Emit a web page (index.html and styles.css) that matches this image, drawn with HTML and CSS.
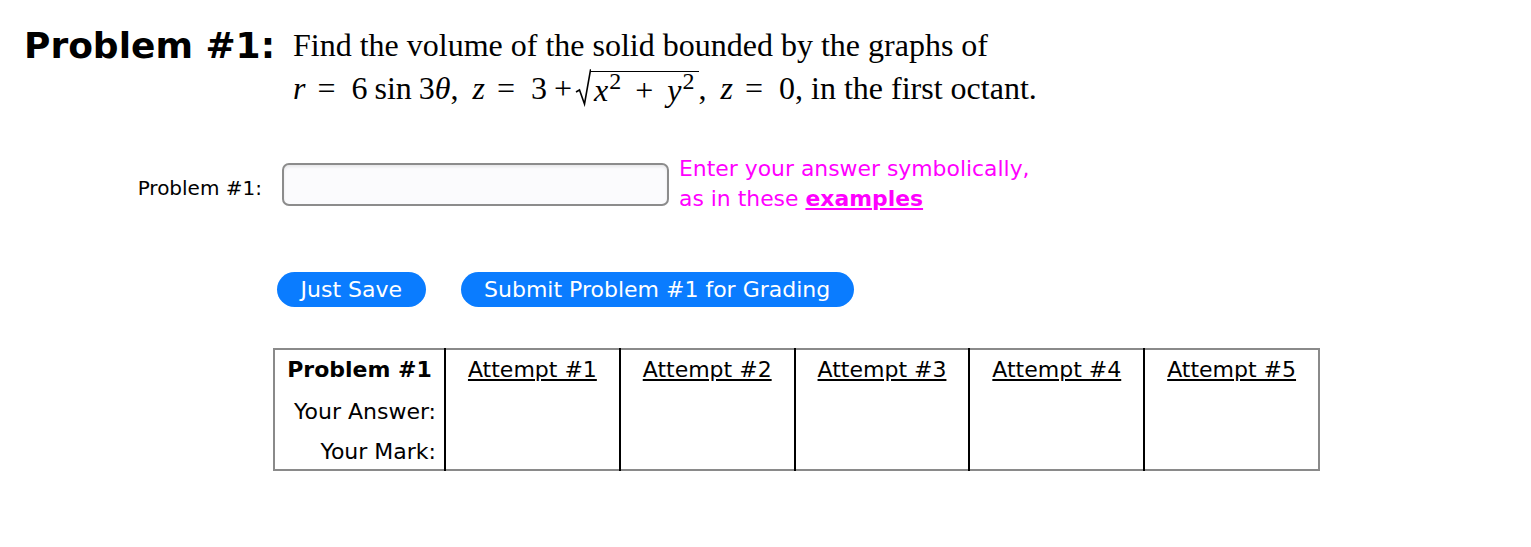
FILE: index.html
```html
<!DOCTYPE html>
<html>
<head>
<meta charset="utf-8">
<link rel="stylesheet" href="styles.css">
</head>
<body>
<div class="problem">
  <div class="ptitle">Problem #1:</div>
  <div class="ptext">
    <div class="pline">Find the volume of the solid bounded by the graphs of</div>
    <div class="pline"><span class="mi">r</span><span class="mo">=</span>6<span class="fn">sin</span>3<span class="mi">θ</span>,<span class="sp"></span><span class="mi">z</span><span class="mo">=</span>3<span class="mb">+</span><span class="sqrt"><svg class="rad" viewBox="0 0 16 38" width="16" height="38"><path d="M1 23 L4.5 21 L9.5 35 L15.5 1 L16 1" fill="none" stroke="#000" stroke-width="1.6"/></svg><span class="radicand"><span class="mi">x</span><sup>2</sup><span class="mr">+</span><span class="mi">y</span><sup>2</sup></span></span>,<span class="sp"></span><span class="mi">z</span><span class="mo">=</span>0, in the first octant.</div>
  </div>
</div>

<div class="answer-row">
  <label class="alabel">Problem #1:</label>
  <input class="ainput" type="text">
  <div class="hint">Enter your answer symbolically,<br>as in these <a class="ex" href="#">examples</a></div>
</div>

<div class="buttons">
  <button class="btn save">Just Save</button>
  <button class="btn submit">Submit Problem #1 for Grading</button>
</div>

<table class="attempts">
  <colgroup>
    <col class="c0">
    <col><col><col><col><col>
  </colgroup>
  <tr class="hrow">
    <th class="first">Problem #1</th>
    <td><a href="#">Attempt #1</a></td>
    <td><a href="#">Attempt #2</a></td>
    <td><a href="#">Attempt #3</a></td>
    <td><a href="#">Attempt #4</a></td>
    <td><a href="#">Attempt #5</a></td>
  </tr>
  <tr class="row2">
    <td class="rl">Your Answer:</td>
    <td></td><td></td><td></td><td></td><td></td>
  </tr>
  <tr class="row3">
    <td class="rl">Your Mark:</td>
    <td></td><td></td><td></td><td></td><td></td>
  </tr>
</table>
</body>
</html>
```

FILE: styles.css
```css
body {
  margin: 8px;
  background: #fff;
  color: #000;
  font-family: "DejaVu Sans", Verdana, sans-serif;
}

.problem {
  display: flex;
  align-items: flex-start;
  padding: 16px 0 0 16px;
}

.ptitle {
  font-weight: bold;
  font-size: 36px;
  line-height: 43px;
  width: 269px;
  flex: none;
}

.ptext {
  font-family: "Liberation Serif", "Times New Roman", serif;
  font-size: 32px;
  line-height: 43px;
}

.pline {
  white-space: nowrap;
}

.mi {
  font-style: italic;
}

.mo {
  margin: 0 16px 0 12px;
}

.mb {
  margin: 0 3px 0 7px;
}

.mr {
  margin: 0 14px;
}

.fn {
  margin: 0 7px 0 7px;
}

.sp {
  display: inline-block;
  width: 14px;
}

.sqrt {
  display: inline-flex;
  align-items: flex-end;
  vertical-align: -8px;
}

.rad {
  display: block;
  margin-bottom: 1px;
}

.radicand {
  border-top: 1.6px solid #000;
  line-height: 36px;
  padding: 0 4px 0 3px;
}

sup {
  font-size: 24px;
  line-height: 0;
  vertical-align: 12px;
  margin-left: 1px;
}

.answer-row {
  display: flex;
  align-items: center;
  margin-top: 44px;
}

.alabel {
  width: 254px;
  text-align: right;
  font-size: 20px;
  padding-top: 8px;
  flex: none;
}

.ainput {
  margin-left: 20px;
  width: 387px;
  height: 43px;
  box-sizing: border-box;
  border: 2px solid #8c8c8c;
  border-radius: 7px;
  background: #fbfbfd;
  box-shadow: inset 0 2px 3px rgba(0, 0, 0, 0.08);
  outline: none;
  flex: none;
}

.hint {
  margin-left: 10px;
  color: #ff00ff;
  font-size: 21.9px;
  line-height: 30px;
}

.ex {
  color: #ff00ff;
  font-weight: bold;
  text-decoration: underline;
}

.buttons {
  display: flex;
  gap: 35px;
  margin: 58px 0 0 269px;
}

.btn {
  height: 35px;
  border: none;
  border-radius: 18px;
  background: #0a7cff;
  color: #fff;
  font-family: "DejaVu Sans", Verdana, sans-serif;
  font-size: 22px;
  padding: 0 23.5px;
}

.attempts {
  margin: 41px 0 0 265px;
  border-collapse: collapse;
  border: 2px solid #8a8a8a;
  font-size: 22px;
  width: 1047px;
  table-layout: fixed;
}

.c0 {
  width: 171px;
}

.attempts td, .attempts th {
  border-left: 2px solid #000;
  padding: 0 8px;
  text-align: center;
}

.attempts .first, .attempts .rl {
  border-left: none;
}

.attempts th {
  font-weight: bold;
}

.attempts .rl {
  text-align: right;
}

.attempts a {
  color: #000;
  text-decoration: underline;
}

.hrow {
  height: 40px;
}

.row2 {
  height: 44px;
}

.row3 {
  height: 37px;
}
```
